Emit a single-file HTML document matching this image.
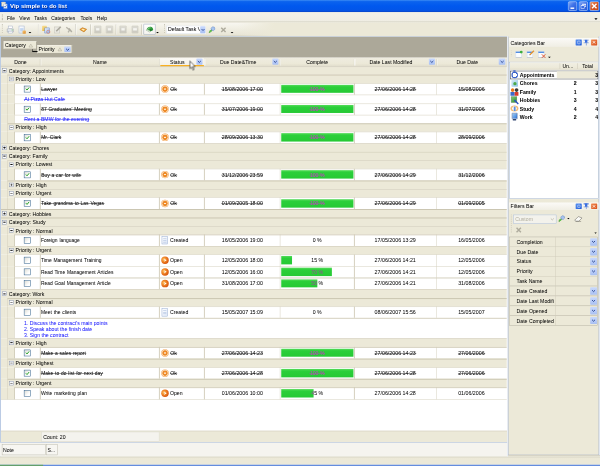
<!DOCTYPE html>
<html><head><meta charset="utf-8"><title>Vip simple to do list</title>
<style>
html,body{margin:0;padding:0;background:#ece9d8;overflow:hidden;}
body{width:600px;height:466px;position:relative;}
#r{position:absolute;left:0;top:0;width:1280px;height:994.2px;transform-origin:0 0;transform:scale(0.46875);overflow:hidden;font-family:"Liberation Sans",sans-serif;}
#fg{left:0;top:0;width:1280px;height:994.2px;filter:blur(0.3px);}
#bg{left:0;top:0;width:1280px;height:994.2px;}
#r div{position:absolute;}
#r svg{overflow:visible;}
.t{font-family:"Liberation Sans",sans-serif;font-size:11px;line-height:14px;height:14px;white-space:nowrap;color:#000;-webkit-text-stroke:0.04px;}
.tb{font-size:11px;}
.s{position:relative;display:inline-block;padding:0 0.6px;}
.s::after{content:"";position:absolute;left:0;right:0;top:7.0px;height:1.05px;background:currentColor;opacity:0.85;}
</style></head><body><div id="r"><div id="bg">
<div style="left:0.00px;top:0.00px;width:1280.00px;height:26.03px;background:linear-gradient(#3c8cf4 0%,#0b63ee 13%,#0058ee 50%,#0355e8 84%,#0a42c4 100%);"></div>
<div style="left:2.77px;top:4.27px;width:9.17px;height:9.81px;background:#f4eeda;border:1px solid #b9b29a;box-sizing:border-box;border-radius:1px;"></div>
<div style="left:6.61px;top:8.32px;width:9.81px;height:10.45px;background:linear-gradient(135deg,#ffffff,#e4ecf8);border:1px solid #9fb0cc;box-sizing:border-box;border-radius:1px;"></div>
<svg style="position:absolute;left:8.32px;top:10.03px" width="6.83" height="6.83" viewBox="0 0 9 9"><path d="M1.2 4.4L3.6 7L7.8 1.6" stroke="#2a5cc8" stroke-width="2" fill="none"/></svg>
<div style="left:1211.52px;top:2.77px;width:19.20px;height:19.84px;background:linear-gradient(135deg,#86aaf6,#3f72e8 45%,#2c5ad4);border:1px solid #fff;border-radius:3px;box-sizing:border-box;"></div>
<div style="left:1234.77px;top:2.77px;width:19.20px;height:19.84px;background:linear-gradient(135deg,#86aaf6,#3f72e8 45%,#2c5ad4);border:1px solid #fff;border-radius:3px;box-sizing:border-box;"></div>
<div style="left:1257.81px;top:2.77px;width:20.05px;height:19.84px;background:linear-gradient(135deg,#eea27a,#d85e2c 40%,#c4461a);border:1px solid #fff;border-radius:3px;box-sizing:border-box;"></div>
<div style="left:1216.64px;top:16.21px;width:7.89px;height:2.77px;background:#fff;"></div>
<div style="left:1242.45px;top:7.68px;width:7.47px;height:6.83px;border:1.3px solid #fff;border-top-width:2px;box-sizing:border-box;"></div>
<div style="left:1239.04px;top:11.09px;width:7.47px;height:6.83px;background:#3a6ce4;border:1.3px solid #fff;border-top-width:2px;box-sizing:border-box;"></div>
<svg style="position:absolute;left:1261.01px;top:5.97px" width="13.65" height="13.65" viewBox="0 0 10 10"><path d="M1.5 1.5L8.5 8.5M8.5 1.5L1.5 8.5" stroke="#fff" stroke-width="2.2"/></svg>
<div style="left:0.00px;top:25.60px;width:1280.00px;height:21.33px;background:linear-gradient(#f3f1e8,#efede3);"></div>
<div style="left:0.00px;top:45.87px;width:1280.00px;height:1.71px;background:#cdcabb;"></div>
<div style="left:4.48px;top:31.15px;width:1.71px;height:1.71px;background:#a9a595;"></div>
<div style="left:4.48px;top:34.56px;width:1.71px;height:1.71px;background:#a9a595;"></div>
<div style="left:4.48px;top:37.97px;width:1.71px;height:1.71px;background:#a9a595;"></div>
<div style="left:4.48px;top:41.39px;width:1.71px;height:1.71px;background:#a9a595;"></div>
<svg style="position:absolute;left:1267.63px;top:39.04px" width="6.83" height="3.41" viewBox="0 0 8 4"><path d="M0 0H8L4 4Z" fill="#000"/></svg>
<div style="left:0.00px;top:47.57px;width:1280.00px;height:30.29px;background:linear-gradient(#f8f7f1 0%,#f1efe4 40%,#e8e5d6 88%,#cbc8b6 100%);"></div>
<div style="left:506.67px;top:47.57px;width:773.33px;height:30.29px;background:linear-gradient(90deg,rgba(236,233,216,0),#ece9d8 10%);"></div>
<div style="left:4.48px;top:52.48px;width:1.71px;height:1.71px;background:#a9a595;"></div>
<div style="left:349.87px;top:52.48px;width:1.71px;height:1.71px;background:#a9a595;"></div>
<div style="left:4.48px;top:56.53px;width:1.71px;height:1.71px;background:#a9a595;"></div>
<div style="left:349.87px;top:56.53px;width:1.71px;height:1.71px;background:#a9a595;"></div>
<div style="left:4.48px;top:60.59px;width:1.71px;height:1.71px;background:#a9a595;"></div>
<div style="left:349.87px;top:60.59px;width:1.71px;height:1.71px;background:#a9a595;"></div>
<div style="left:4.48px;top:64.64px;width:1.71px;height:1.71px;background:#a9a595;"></div>
<div style="left:349.87px;top:64.64px;width:1.71px;height:1.71px;background:#a9a595;"></div>
<div style="left:4.48px;top:68.69px;width:1.71px;height:1.71px;background:#a9a595;"></div>
<div style="left:349.87px;top:68.69px;width:1.71px;height:1.71px;background:#a9a595;"></div>
<div style="left:14.51px;top:60.59px;width:14.51px;height:8.11px;background:linear-gradient(#f4f6fa,#cfd6e4);border:1px solid #8b95aa;box-sizing:border-box;border-radius:1px;"></div>
<div style="left:16.85px;top:54.83px;width:9.81px;height:6.40px;background:#fff;border:1px solid #9aa4b8;box-sizing:border-box;"></div>
<div style="left:16.85px;top:65.71px;width:9.81px;height:5.76px;background:#fff;border:1px solid #9aa4b8;box-sizing:border-box;"></div>
<div style="left:25.17px;top:63.15px;width:2.13px;height:1.71px;background:#5fbf4f;"></div>
<div style="left:40.11px;top:54.83px;width:11.95px;height:16.21px;background:linear-gradient(135deg,#fff,#dfe8f6);border:1px solid #9fb0cf;box-sizing:border-box;"></div>
<div style="left:43.09px;top:59.73px;width:6.83px;height:6.83px;background:#c4d6f0;"></div>
<div style="left:47.79px;top:64.85px;width:6.83px;height:6.83px;background:linear-gradient(135deg,#f4c878,#e08a28);border-radius:1px;"></div>
<svg style="position:absolute;left:61.01px;top:68.05px" width="5.97" height="2.99" viewBox="0 0 8 4"><path d="M0 0H8L4 4Z" fill="#000"/></svg>
<div style="left:80.53px;top:51.63px;width:1.49px;height:22.19px;background:#b3b09f;"></div>
<div style="left:81.92px;top:52.48px;width:1.07px;height:21.97px;background:#fff;"></div>
<div style="left:89.60px;top:55.47px;width:10.03px;height:10.24px;background:linear-gradient(#f7dc8c,#eebf4c);border-radius:1px;"></div>
<div style="left:95.36px;top:59.31px;width:10.67px;height:12.16px;background:linear-gradient(135deg,#e6effc,#8fb2ea);border:1px solid #5f86cc;box-sizing:border-box;"></div>
<div style="left:98.77px;top:63.57px;width:8.11px;height:8.11px;border:1.6px solid #e2664a;box-sizing:border-box;border-radius:50%;"></div>
<div style="left:115.63px;top:56.75px;width:12.37px;height:14.51px;background:#e9e8e1;border:1px solid #c3c1b6;box-sizing:border-box;"></div>
<svg style="position:absolute;left:117.76px;top:54.61px" width="13.65" height="13.65" viewBox="0 0 10 10"><path d="M1.5 8.5L8.5 1.5" stroke="#a9a79c" stroke-width="2.4"/></svg>
<svg style="position:absolute;left:139.09px;top:55.04px" width="15.79" height="15.79" viewBox="0 0 10 10"><path d="M1.5 2L6 5.5L4 9" stroke="#b7b5aa" stroke-width="1.8" fill="none"/><path d="M5 3.5L9 8.5" stroke="#b0aea3" stroke-width="2"/></svg>
<div style="left:160.11px;top:51.63px;width:1.49px;height:22.19px;background:#b3b09f;"></div>
<div style="left:161.49px;top:52.48px;width:1.07px;height:21.97px;background:#fff;"></div>
<svg style="position:absolute;left:169.17px;top:58.03px" width="17.07" height="11.31" viewBox="0 0 20 14"><path d="M1 6L8 1.5L19 5.5L12 12.5Z" fill="#f1a838" stroke="#b56a16" stroke-width="1.5"/><path d="M5.5 6.4L9 4.2L14.2 6.2L10.8 9.4Z" fill="#fdebc0"/></svg>
<div style="left:192.53px;top:51.63px;width:1.49px;height:22.19px;background:#b3b09f;"></div>
<div style="left:193.92px;top:52.48px;width:1.07px;height:21.97px;background:#fff;"></div>
<div style="left:200.75px;top:55.25px;width:14.93px;height:15.79px;background:linear-gradient(#dddcd5,#c9c7bd);border:1px solid #c4c2b8;box-sizing:border-box;border-radius:1px;"></div>
<div style="left:204.59px;top:59.73px;width:7.25px;height:5.12px;background:#f4f4f0;"></div>
<div style="left:225.71px;top:55.25px;width:14.93px;height:15.79px;background:linear-gradient(#dddcd5,#c9c7bd);border:1px solid #c4c2b8;box-sizing:border-box;border-radius:1px;"></div>
<div style="left:229.55px;top:59.73px;width:7.25px;height:5.12px;background:#f4f4f0;"></div>
<div style="left:246.72px;top:51.63px;width:1.49px;height:22.19px;background:#b3b09f;"></div>
<div style="left:248.11px;top:52.48px;width:1.07px;height:21.97px;background:#fff;"></div>
<div style="left:254.93px;top:55.25px;width:14.93px;height:15.79px;background:linear-gradient(#dddcd5,#c9c7bd);border:1px solid #c4c2b8;box-sizing:border-box;border-radius:1px;"></div>
<div style="left:258.77px;top:59.73px;width:7.25px;height:5.12px;background:#f4f4f0;"></div>
<div style="left:280.53px;top:55.25px;width:14.93px;height:15.79px;background:linear-gradient(#dddcd5,#c9c7bd);border:1px solid #c4c2b8;box-sizing:border-box;border-radius:1px;"></div>
<div style="left:284.37px;top:59.73px;width:7.25px;height:5.12px;background:#f4f4f0;"></div>
<div style="left:301.97px;top:51.63px;width:1.49px;height:22.19px;background:#b3b09f;"></div>
<div style="left:303.36px;top:52.48px;width:1.07px;height:21.97px;background:#fff;"></div>
<div style="left:305.92px;top:51.20px;width:26.45px;height:22.61px;background:linear-gradient(#ffffff,#f4f3ee);border:1px solid #9aa9c4;box-sizing:border-box;border-radius:1.5px;"></div>
<svg style="position:absolute;left:309.76px;top:53.97px" width="18.77" height="17.07" viewBox="0 0 22 20"><path d="M3 13C3 6 9 2.5 14 3.5C18 4.5 20 8 19.5 11.5L11 16Z" fill="#2f9a3c"/><path d="M5.5 12C6.5 8 9.5 6 13 6.2" stroke="#a6e0a0" stroke-width="2" fill="none"/><path d="M2.5 12.5L11 17.5L13 14.5L4 10.5Z" fill="#e9efe4" stroke="#8fa38a" stroke-width="0.8"/><path d="M12 9L19.5 11.5L12 15Z" fill="#1f7a2c"/></svg>
<svg style="position:absolute;left:333.23px;top:67.63px" width="5.97" height="2.99" viewBox="0 0 8 4"><path d="M0 0H8L4 4Z" fill="#000"/></svg>
<div style="left:355.20px;top:55.04px;width:83.41px;height:16.85px;background:#fff;border:1px solid #dfe5ef;box-sizing:border-box;"></div>
<div style="left:427.09px;top:55.89px;width:11.31px;height:15.15px;background:linear-gradient(#c9d9fc,#a9c0f3);border-radius:1.5px;"></div>
<svg style="position:absolute;left:428.59px;top:61.23px" width="8.32" height="5.12" viewBox="0 0 8 5"><path d="M1 1L4 4L7 1" stroke="#2a478f" stroke-width="1.9" fill="none"/></svg>
<svg style="position:absolute;left:443.73px;top:54.61px" width="16.64" height="16.64" viewBox="0 0 16 16"><path d="M2 14L10 6" stroke="#55a03c" stroke-width="2.6"/><path d="M9 2l4 1 1 4-3 3-4-1-1-4z" fill="#a9c4ee" stroke="#5f86c8" stroke-width="1"/><circle cx="5" cy="11" r="2.2" fill="#62bf50"/></svg>
<svg style="position:absolute;left:469.76px;top:56.53px" width="13.23" height="13.23" viewBox="0 0 10 10"><path d="M1.5 1.5L8.5 8.5M8.5 1.5L1.5 8.5" stroke="#aeab9d" stroke-width="2.3"/></svg>
<svg style="position:absolute;left:491.95px;top:68.05px" width="5.97" height="2.99" viewBox="0 0 8 4"><path d="M0 0H8L4 4Z" fill="#000"/></svg>
<div style="left:0.00px;top:77.23px;width:1082.88px;height:896.43px;background:#fff;"></div>
<div style="left:0.00px;top:77.23px;width:2.13px;height:896.43px;background:#b7c8e3;"></div>
<div style="left:1.92px;top:77.65px;width:1079.68px;height:45.44px;background:#aca899;"></div>
<div style="left:0.00px;top:76.59px;width:1082.45px;height:1.28px;background:#b9cbe6;"></div>
<div style="left:8.11px;top:88.32px;width:69.55px;height:17.07px;background:#ece9d8;border:1px solid #f8f7f1;border-right-color:#8d897a;border-bottom-color:#8d897a;box-sizing:border-box;"></div>
<div style="left:80.21px;top:96.43px;width:73.39px;height:17.28px;background:#ece9d8;border:1px solid #f8f7f1;border-right-color:#8d897a;border-bottom-color:#8d897a;box-sizing:border-box;"></div>
<div style="left:69.12px;top:105.39px;width:1.28px;height:5.12px;background:#000;"></div>
<div style="left:69.12px;top:109.44px;width:11.09px;height:1.28px;background:#000;"></div>
<svg style="position:absolute;left:60.80px;top:92.59px" width="9.39" height="8.32" viewBox="0 0 8 7"><path d="M0.7 6.3L4 0.8L7.3 6.3Z" fill="none" stroke="#aca899" stroke-width="1"/></svg>
<svg style="position:absolute;left:123.09px;top:100.91px" width="9.39" height="8.32" viewBox="0 0 8 7"><path d="M0.7 6.3L4 0.8L7.3 6.3Z" fill="none" stroke="#aca899" stroke-width="1"/></svg>
<div style="left:137.39px;top:98.77px;width:13.65px;height:12.37px;background:linear-gradient(#c9d9fc,#a9c0f3);border-radius:1.5px;"></div>
<svg style="position:absolute;left:139.95px;top:102.61px" width="8.53" height="5.33" viewBox="0 0 8 5"><path d="M1 1L4 4L7 1" stroke="#2a478f" stroke-width="1.9" fill="none"/></svg>
<div style="left:1.92px;top:123.09px;width:1079.68px;height:18.99px;background:linear-gradient(#efece0,#ece9d8 70%,#e2decd 100%);border-bottom:1px solid #cbc7b8;box-sizing:border-box;"></div>
<div style="left:85.23px;top:125.65px;width:1.28px;height:13.87px;background:#c9c5b5;"></div>
<div style="left:86.51px;top:125.65px;width:1.17px;height:13.87px;background:#fff;"></div>
<div style="left:339.52px;top:125.65px;width:1.28px;height:13.87px;background:#c9c5b5;"></div>
<div style="left:340.80px;top:125.65px;width:1.17px;height:13.87px;background:#fff;"></div>
<div style="left:435.09px;top:125.65px;width:1.28px;height:13.87px;background:#c9c5b5;"></div>
<div style="left:436.37px;top:125.65px;width:1.17px;height:13.87px;background:#fff;"></div>
<div style="left:596.80px;top:125.65px;width:1.28px;height:13.87px;background:#c9c5b5;"></div>
<div style="left:598.08px;top:125.65px;width:1.17px;height:13.87px;background:#fff;"></div>
<div style="left:755.09px;top:125.65px;width:1.28px;height:13.87px;background:#c9c5b5;"></div>
<div style="left:756.37px;top:125.65px;width:1.17px;height:13.87px;background:#fff;"></div>
<div style="left:930.67px;top:125.65px;width:1.28px;height:13.87px;background:#c9c5b5;"></div>
<div style="left:931.95px;top:125.65px;width:1.17px;height:13.87px;background:#fff;"></div>
<div style="left:1080.00px;top:125.65px;width:1.28px;height:13.87px;background:#c9c5b5;"></div>
<div style="left:1081.28px;top:125.65px;width:1.17px;height:13.87px;background:#fff;"></div>
<div style="left:341.33px;top:124.16px;width:93.65px;height:15.36px;background:linear-gradient(#fbfaf6,#f3f1e8);"></div>
<div style="left:341.76px;top:139.09px;width:93.23px;height:2.99px;background:#f9a600;"></div>
<div style="left:418.56px;top:125.44px;width:13.65px;height:12.37px;background:linear-gradient(#c9d9fc,#a9c0f3);border-radius:1.5px;"></div>
<svg style="position:absolute;left:421.12px;top:129.28px" width="8.53" height="5.33" viewBox="0 0 8 5"><path d="M1 1L4 4L7 1" stroke="#2a478f" stroke-width="1.9" fill="none"/></svg>
<div style="left:580.69px;top:125.44px;width:13.65px;height:12.37px;background:linear-gradient(#c9d9fc,#a9c0f3);border-radius:1.5px;"></div>
<svg style="position:absolute;left:583.25px;top:129.28px" width="8.53" height="5.33" viewBox="0 0 8 5"><path d="M1 1L4 4L7 1" stroke="#2a478f" stroke-width="1.9" fill="none"/></svg>
<div style="left:914.77px;top:125.44px;width:13.65px;height:12.37px;background:linear-gradient(#c9d9fc,#a9c0f3);border-radius:1.5px;"></div>
<svg style="position:absolute;left:917.33px;top:129.28px" width="8.53" height="5.33" viewBox="0 0 8 5"><path d="M1 1L4 4L7 1" stroke="#2a478f" stroke-width="1.9" fill="none"/></svg>
<div style="left:1064.32px;top:125.44px;width:13.65px;height:12.37px;background:linear-gradient(#c9d9fc,#a9c0f3);border-radius:1.5px;"></div>
<svg style="position:absolute;left:1066.88px;top:129.28px" width="8.53" height="5.33" viewBox="0 0 8 5"><path d="M1 1L4 4L7 1" stroke="#2a478f" stroke-width="1.9" fill="none"/></svg>
<div style="left:1.92px;top:142.08px;width:1078.83px;height:17.07px;background:#ece9d8;"></div>
<div style="left:1.92px;top:141.87px;width:1078.83px;height:1.60px;background:#c9c4af;"></div>
<div style="left:5.12px;top:146.35px;width:8.96px;height:8.96px;background:#fff;border:1.8px solid #808ca6;box-sizing:border-box;"></div>
<div style="left:7.25px;top:150.06px;width:4.69px;height:1.54px;background:#000;"></div>
<div style="left:1.92px;top:159.15px;width:1078.83px;height:18.56px;background:#ece9d8;"></div>
<div style="left:16.21px;top:158.93px;width:1064.53px;height:1.60px;background:#c9c4af;"></div>
<div style="left:15.57px;top:159.15px;width:1.28px;height:18.56px;background:#d2cdba;"></div>
<div style="left:20.05px;top:164.16px;width:8.96px;height:8.96px;background:#fff;border:1.8px solid #808ca6;box-sizing:border-box;"></div>
<div style="left:22.19px;top:167.87px;width:4.69px;height:1.54px;background:#000;"></div>
<div style="left:1.92px;top:177.71px;width:29.23px;height:24.11px;background:#ece9d8;"></div>
<div style="left:15.57px;top:177.71px;width:1.28px;height:24.11px;background:#d2cdba;"></div>
<div style="left:31.15px;top:177.71px;width:1049.60px;height:1.28px;background:#d2cdba;"></div>
<div style="left:30.29px;top:177.71px;width:1.71px;height:24.11px;background:#d2cdba;"></div>
<div style="left:85.12px;top:177.71px;width:1.71px;height:24.11px;background:#d2cdba;"></div>
<div style="left:339.41px;top:177.71px;width:1.71px;height:24.11px;background:#d2cdba;"></div>
<div style="left:434.99px;top:177.71px;width:1.71px;height:24.11px;background:#d2cdba;"></div>
<div style="left:596.69px;top:177.71px;width:1.71px;height:24.11px;background:#d2cdba;"></div>
<div style="left:754.99px;top:177.71px;width:1.71px;height:24.11px;background:#d2cdba;"></div>
<div style="left:930.56px;top:177.71px;width:1.71px;height:24.11px;background:#d2cdba;"></div>
<div style="left:51.09px;top:182.83px;width:14.29px;height:14.29px;background:linear-gradient(135deg,#dcdcd4,#fff 70%);border:1.3px solid #1c5180;box-sizing:border-box;"></div>
<svg style="position:absolute;left:53.55px;top:185.28px" width="9.39" height="9.39" viewBox="0 0 9 9"><path d="M1.2 4.2L3.6 6.8L7.8 1.6" stroke="#21a121" stroke-width="2" fill="none"/></svg>
<div style="left:343.89px;top:181.87px;width:15.79px;height:15.79px;background:radial-gradient(circle,#fff3e0 0 9%,#ee8a28 20% 44%,#f9cfa2 52% 62%,#f0a050 72%,#ee9440 100%);border-radius:50%;"></div>
<div style="left:599.89px;top:181.12px;width:154.24px;height:16.85px;background:linear-gradient(#58dc5c,#2bcf3a 25%,#26c934 100%);"></div>
<div style="left:1.92px;top:201.81px;width:29.23px;height:18.99px;background:#ece9d8;"></div>
<div style="left:15.57px;top:201.81px;width:1.28px;height:18.99px;background:#d2cdba;"></div>
<div style="left:30.51px;top:201.81px;width:1.28px;height:18.99px;background:#d2cdba;"></div>
<div style="left:31.15px;top:201.81px;width:1049.60px;height:1.28px;background:#d2cdba;"></div>
<div style="left:1.92px;top:220.80px;width:29.23px;height:24.11px;background:#ece9d8;"></div>
<div style="left:15.57px;top:220.80px;width:1.28px;height:24.11px;background:#d2cdba;"></div>
<div style="left:31.15px;top:220.80px;width:1049.60px;height:1.28px;background:#d2cdba;"></div>
<div style="left:30.29px;top:220.80px;width:1.71px;height:24.11px;background:#d2cdba;"></div>
<div style="left:85.12px;top:220.80px;width:1.71px;height:24.11px;background:#d2cdba;"></div>
<div style="left:339.41px;top:220.80px;width:1.71px;height:24.11px;background:#d2cdba;"></div>
<div style="left:434.99px;top:220.80px;width:1.71px;height:24.11px;background:#d2cdba;"></div>
<div style="left:596.69px;top:220.80px;width:1.71px;height:24.11px;background:#d2cdba;"></div>
<div style="left:754.99px;top:220.80px;width:1.71px;height:24.11px;background:#d2cdba;"></div>
<div style="left:930.56px;top:220.80px;width:1.71px;height:24.11px;background:#d2cdba;"></div>
<div style="left:51.09px;top:225.92px;width:14.29px;height:14.29px;background:linear-gradient(135deg,#dcdcd4,#fff 70%);border:1.3px solid #1c5180;box-sizing:border-box;"></div>
<svg style="position:absolute;left:53.55px;top:228.37px" width="9.39" height="9.39" viewBox="0 0 9 9"><path d="M1.2 4.2L3.6 6.8L7.8 1.6" stroke="#21a121" stroke-width="2" fill="none"/></svg>
<div style="left:343.89px;top:224.96px;width:15.79px;height:15.79px;background:radial-gradient(circle,#fff3e0 0 9%,#ee8a28 20% 44%,#f9cfa2 52% 62%,#f0a050 72%,#ee9440 100%);border-radius:50%;"></div>
<div style="left:599.89px;top:224.21px;width:154.24px;height:16.85px;background:linear-gradient(#58dc5c,#2bcf3a 25%,#26c934 100%);"></div>
<div style="left:1.92px;top:244.91px;width:29.23px;height:18.67px;background:#ece9d8;"></div>
<div style="left:15.57px;top:244.91px;width:1.28px;height:18.67px;background:#d2cdba;"></div>
<div style="left:30.51px;top:244.91px;width:1.28px;height:18.67px;background:#d2cdba;"></div>
<div style="left:31.15px;top:244.91px;width:1049.60px;height:1.28px;background:#d2cdba;"></div>
<div style="left:1.92px;top:263.57px;width:1078.83px;height:16.96px;background:#ece9d8;"></div>
<div style="left:16.21px;top:263.36px;width:1064.53px;height:1.60px;background:#c9c4af;"></div>
<div style="left:15.57px;top:263.57px;width:1.28px;height:16.96px;background:#d2cdba;"></div>
<div style="left:20.05px;top:267.79px;width:8.96px;height:8.96px;background:#fff;border:1.8px solid #808ca6;box-sizing:border-box;"></div>
<div style="left:22.19px;top:271.50px;width:4.69px;height:1.54px;background:#000;"></div>
<div style="left:1.92px;top:280.53px;width:29.23px;height:25.39px;background:#ece9d8;"></div>
<div style="left:15.57px;top:280.53px;width:1.28px;height:25.39px;background:#d2cdba;"></div>
<div style="left:31.15px;top:280.53px;width:1049.60px;height:1.28px;background:#d2cdba;"></div>
<div style="left:30.29px;top:280.53px;width:1.71px;height:25.39px;background:#d2cdba;"></div>
<div style="left:85.12px;top:280.53px;width:1.71px;height:25.39px;background:#d2cdba;"></div>
<div style="left:339.41px;top:280.53px;width:1.71px;height:25.39px;background:#d2cdba;"></div>
<div style="left:434.99px;top:280.53px;width:1.71px;height:25.39px;background:#d2cdba;"></div>
<div style="left:596.69px;top:280.53px;width:1.71px;height:25.39px;background:#d2cdba;"></div>
<div style="left:754.99px;top:280.53px;width:1.71px;height:25.39px;background:#d2cdba;"></div>
<div style="left:930.56px;top:280.53px;width:1.71px;height:25.39px;background:#d2cdba;"></div>
<div style="left:51.09px;top:286.29px;width:14.29px;height:14.29px;background:linear-gradient(135deg,#dcdcd4,#fff 70%);border:1.3px solid #1c5180;box-sizing:border-box;"></div>
<svg style="position:absolute;left:53.55px;top:288.75px" width="9.39" height="9.39" viewBox="0 0 9 9"><path d="M1.2 4.2L3.6 6.8L7.8 1.6" stroke="#21a121" stroke-width="2" fill="none"/></svg>
<div style="left:343.89px;top:285.33px;width:15.79px;height:15.79px;background:radial-gradient(circle,#fff3e0 0 9%,#ee8a28 20% 44%,#f9cfa2 52% 62%,#f0a050 72%,#ee9440 100%);border-radius:50%;"></div>
<div style="left:599.89px;top:283.95px;width:154.24px;height:18.13px;background:linear-gradient(#58dc5c,#2bcf3a 25%,#26c934 100%);"></div>
<div style="left:1.92px;top:305.92px;width:1078.83px;height:18.13px;background:#ece9d8;"></div>
<div style="left:1.92px;top:305.71px;width:1078.83px;height:1.60px;background:#c9c4af;"></div>
<div style="left:5.12px;top:310.72px;width:8.96px;height:8.96px;background:#fff;border:1.8px solid #808ca6;box-sizing:border-box;"></div>
<div style="left:7.25px;top:314.43px;width:4.69px;height:1.54px;background:#000;"></div>
<div style="left:8.83px;top:312.85px;width:1.54px;height:4.69px;background:#000;"></div>
<div style="left:1.92px;top:324.05px;width:1078.83px;height:17.92px;background:#ece9d8;"></div>
<div style="left:1.92px;top:323.84px;width:1078.83px;height:1.60px;background:#c9c4af;"></div>
<div style="left:5.12px;top:328.75px;width:8.96px;height:8.96px;background:#fff;border:1.8px solid #808ca6;box-sizing:border-box;"></div>
<div style="left:7.25px;top:332.46px;width:4.69px;height:1.54px;background:#000;"></div>
<div style="left:1.92px;top:341.97px;width:1078.83px;height:17.92px;background:#ece9d8;"></div>
<div style="left:16.21px;top:341.76px;width:1064.53px;height:1.60px;background:#c9c4af;"></div>
<div style="left:15.57px;top:341.97px;width:1.28px;height:17.92px;background:#d2cdba;"></div>
<div style="left:20.05px;top:346.67px;width:8.96px;height:8.96px;background:#fff;border:1.8px solid #808ca6;box-sizing:border-box;"></div>
<div style="left:22.19px;top:350.38px;width:4.69px;height:1.54px;background:#000;"></div>
<div style="left:1.92px;top:359.89px;width:29.23px;height:25.39px;background:#ece9d8;"></div>
<div style="left:15.57px;top:359.89px;width:1.28px;height:25.39px;background:#d2cdba;"></div>
<div style="left:31.15px;top:359.89px;width:1049.60px;height:1.28px;background:#d2cdba;"></div>
<div style="left:30.29px;top:359.89px;width:1.71px;height:25.39px;background:#d2cdba;"></div>
<div style="left:85.12px;top:359.89px;width:1.71px;height:25.39px;background:#d2cdba;"></div>
<div style="left:339.41px;top:359.89px;width:1.71px;height:25.39px;background:#d2cdba;"></div>
<div style="left:434.99px;top:359.89px;width:1.71px;height:25.39px;background:#d2cdba;"></div>
<div style="left:596.69px;top:359.89px;width:1.71px;height:25.39px;background:#d2cdba;"></div>
<div style="left:754.99px;top:359.89px;width:1.71px;height:25.39px;background:#d2cdba;"></div>
<div style="left:930.56px;top:359.89px;width:1.71px;height:25.39px;background:#d2cdba;"></div>
<div style="left:51.09px;top:365.65px;width:14.29px;height:14.29px;background:linear-gradient(135deg,#dcdcd4,#fff 70%);border:1.3px solid #1c5180;box-sizing:border-box;"></div>
<svg style="position:absolute;left:53.55px;top:368.11px" width="9.39" height="9.39" viewBox="0 0 9 9"><path d="M1.2 4.2L3.6 6.8L7.8 1.6" stroke="#21a121" stroke-width="2" fill="none"/></svg>
<div style="left:343.89px;top:364.69px;width:15.79px;height:15.79px;background:radial-gradient(circle,#fff3e0 0 9%,#ee8a28 20% 44%,#f9cfa2 52% 62%,#f0a050 72%,#ee9440 100%);border-radius:50%;"></div>
<div style="left:599.89px;top:363.31px;width:154.24px;height:18.13px;background:linear-gradient(#58dc5c,#2bcf3a 25%,#26c934 100%);"></div>
<div style="left:1.92px;top:385.28px;width:1078.83px;height:18.45px;background:#ece9d8;"></div>
<div style="left:16.21px;top:385.07px;width:1064.53px;height:1.60px;background:#c9c4af;"></div>
<div style="left:15.57px;top:385.28px;width:1.28px;height:18.45px;background:#d2cdba;"></div>
<div style="left:20.05px;top:390.24px;width:8.96px;height:8.96px;background:#fff;border:1.8px solid #808ca6;box-sizing:border-box;"></div>
<div style="left:22.19px;top:393.95px;width:4.69px;height:1.54px;background:#000;"></div>
<div style="left:23.77px;top:392.37px;width:1.54px;height:4.69px;background:#000;"></div>
<div style="left:1.92px;top:403.73px;width:1078.83px;height:17.39px;background:#ece9d8;"></div>
<div style="left:16.21px;top:403.52px;width:1064.53px;height:1.60px;background:#c9c4af;"></div>
<div style="left:15.57px;top:403.73px;width:1.28px;height:17.39px;background:#d2cdba;"></div>
<div style="left:20.05px;top:408.16px;width:8.96px;height:8.96px;background:#fff;border:1.8px solid #808ca6;box-sizing:border-box;"></div>
<div style="left:22.19px;top:411.87px;width:4.69px;height:1.54px;background:#000;"></div>
<div style="left:1.92px;top:421.12px;width:29.23px;height:25.28px;background:#ece9d8;"></div>
<div style="left:15.57px;top:421.12px;width:1.28px;height:25.28px;background:#d2cdba;"></div>
<div style="left:31.15px;top:421.12px;width:1049.60px;height:1.28px;background:#d2cdba;"></div>
<div style="left:30.29px;top:421.12px;width:1.71px;height:25.28px;background:#d2cdba;"></div>
<div style="left:85.12px;top:421.12px;width:1.71px;height:25.28px;background:#d2cdba;"></div>
<div style="left:339.41px;top:421.12px;width:1.71px;height:25.28px;background:#d2cdba;"></div>
<div style="left:434.99px;top:421.12px;width:1.71px;height:25.28px;background:#d2cdba;"></div>
<div style="left:596.69px;top:421.12px;width:1.71px;height:25.28px;background:#d2cdba;"></div>
<div style="left:754.99px;top:421.12px;width:1.71px;height:25.28px;background:#d2cdba;"></div>
<div style="left:930.56px;top:421.12px;width:1.71px;height:25.28px;background:#d2cdba;"></div>
<div style="left:51.09px;top:426.83px;width:14.29px;height:14.29px;background:linear-gradient(135deg,#dcdcd4,#fff 70%);border:1.3px solid #1c5180;box-sizing:border-box;"></div>
<svg style="position:absolute;left:53.55px;top:429.28px" width="9.39" height="9.39" viewBox="0 0 9 9"><path d="M1.2 4.2L3.6 6.8L7.8 1.6" stroke="#21a121" stroke-width="2" fill="none"/></svg>
<div style="left:343.89px;top:425.87px;width:15.79px;height:15.79px;background:radial-gradient(circle,#fff3e0 0 9%,#ee8a28 20% 44%,#f9cfa2 52% 62%,#f0a050 72%,#ee9440 100%);border-radius:50%;"></div>
<div style="left:599.89px;top:424.53px;width:154.24px;height:18.03px;background:linear-gradient(#58dc5c,#2bcf3a 25%,#26c934 100%);"></div>
<div style="left:1.92px;top:446.40px;width:1078.83px;height:18.24px;background:#ece9d8;"></div>
<div style="left:1.92px;top:446.19px;width:1078.83px;height:1.60px;background:#c9c4af;"></div>
<div style="left:5.12px;top:451.25px;width:8.96px;height:8.96px;background:#fff;border:1.8px solid #808ca6;box-sizing:border-box;"></div>
<div style="left:7.25px;top:454.97px;width:4.69px;height:1.54px;background:#000;"></div>
<div style="left:8.83px;top:453.39px;width:1.54px;height:4.69px;background:#000;"></div>
<div style="left:1.92px;top:464.64px;width:1078.83px;height:18.35px;background:#ece9d8;"></div>
<div style="left:1.92px;top:464.43px;width:1078.83px;height:1.60px;background:#c9c4af;"></div>
<div style="left:5.12px;top:469.55px;width:8.96px;height:8.96px;background:#fff;border:1.8px solid #808ca6;box-sizing:border-box;"></div>
<div style="left:7.25px;top:473.26px;width:4.69px;height:1.54px;background:#000;"></div>
<div style="left:1.92px;top:482.99px;width:1078.83px;height:17.28px;background:#ece9d8;"></div>
<div style="left:16.21px;top:482.77px;width:1064.53px;height:1.60px;background:#c9c4af;"></div>
<div style="left:15.57px;top:482.99px;width:1.28px;height:17.28px;background:#d2cdba;"></div>
<div style="left:20.05px;top:487.36px;width:8.96px;height:8.96px;background:#fff;border:1.8px solid #808ca6;box-sizing:border-box;"></div>
<div style="left:22.19px;top:491.07px;width:4.69px;height:1.54px;background:#000;"></div>
<div style="left:1.92px;top:500.27px;width:29.23px;height:24.75px;background:#ece9d8;"></div>
<div style="left:15.57px;top:500.27px;width:1.28px;height:24.75px;background:#d2cdba;"></div>
<div style="left:31.15px;top:500.27px;width:1049.60px;height:1.28px;background:#d2cdba;"></div>
<div style="left:30.29px;top:500.27px;width:1.71px;height:24.75px;background:#d2cdba;"></div>
<div style="left:85.12px;top:500.27px;width:1.71px;height:24.75px;background:#d2cdba;"></div>
<div style="left:339.41px;top:500.27px;width:1.71px;height:24.75px;background:#d2cdba;"></div>
<div style="left:434.99px;top:500.27px;width:1.71px;height:24.75px;background:#d2cdba;"></div>
<div style="left:596.69px;top:500.27px;width:1.71px;height:24.75px;background:#d2cdba;"></div>
<div style="left:754.99px;top:500.27px;width:1.71px;height:24.75px;background:#d2cdba;"></div>
<div style="left:930.56px;top:500.27px;width:1.71px;height:24.75px;background:#d2cdba;"></div>
<div style="left:51.09px;top:505.71px;width:14.29px;height:14.29px;background:linear-gradient(135deg,#dcdcd4,#fff 70%);border:1.3px solid #1c5180;box-sizing:border-box;"></div>
<div style="left:345.39px;top:504.11px;width:12.80px;height:17.07px;background:linear-gradient(135deg,#fff,#dfe8f8);border:1px solid #8ea6cf;box-sizing:border-box;"></div>
<div style="left:348.37px;top:508.80px;width:6.83px;height:1.07px;background:#9fb4d8;"></div>
<div style="left:348.37px;top:512.21px;width:6.83px;height:1.07px;background:#9fb4d8;"></div>
<div style="left:348.37px;top:515.63px;width:6.83px;height:1.07px;background:#9fb4d8;"></div>
<div style="left:1.92px;top:525.01px;width:1078.83px;height:17.81px;background:#ece9d8;"></div>
<div style="left:16.21px;top:524.80px;width:1064.53px;height:1.60px;background:#c9c4af;"></div>
<div style="left:15.57px;top:525.01px;width:1.28px;height:17.81px;background:#d2cdba;"></div>
<div style="left:20.05px;top:529.65px;width:8.96px;height:8.96px;background:#fff;border:1.8px solid #808ca6;box-sizing:border-box;"></div>
<div style="left:22.19px;top:533.37px;width:4.69px;height:1.54px;background:#000;"></div>
<div style="left:1.92px;top:542.83px;width:29.23px;height:24.85px;background:#ece9d8;"></div>
<div style="left:15.57px;top:542.83px;width:1.28px;height:24.85px;background:#d2cdba;"></div>
<div style="left:31.15px;top:542.83px;width:1049.60px;height:1.28px;background:#d2cdba;"></div>
<div style="left:30.29px;top:542.83px;width:1.71px;height:24.85px;background:#d2cdba;"></div>
<div style="left:85.12px;top:542.83px;width:1.71px;height:24.85px;background:#d2cdba;"></div>
<div style="left:339.41px;top:542.83px;width:1.71px;height:24.85px;background:#d2cdba;"></div>
<div style="left:434.99px;top:542.83px;width:1.71px;height:24.85px;background:#d2cdba;"></div>
<div style="left:596.69px;top:542.83px;width:1.71px;height:24.85px;background:#d2cdba;"></div>
<div style="left:754.99px;top:542.83px;width:1.71px;height:24.85px;background:#d2cdba;"></div>
<div style="left:930.56px;top:542.83px;width:1.71px;height:24.85px;background:#d2cdba;"></div>
<div style="left:51.09px;top:548.32px;width:14.29px;height:14.29px;background:linear-gradient(135deg,#dcdcd4,#fff 70%);border:1.3px solid #1c5180;box-sizing:border-box;"></div>
<div style="left:343.89px;top:547.36px;width:15.79px;height:15.79px;background:radial-gradient(circle at 36% 40%,#ffc870 0,#f08a2a 32%,#dc5a10 68%,#c44c08 100%);border-radius:50%;"></div>
<svg style="position:absolute;left:345.81px;top:549.28px" width="11.95" height="11.95" viewBox="0 0 10 10"><path d="M3 2L8 5L3 8L4.6 5Z" fill="#fff"/></svg>
<div style="left:599.89px;top:546.24px;width:23.14px;height:17.60px;background:linear-gradient(#58dc5c,#2bcf3a 25%,#26c934 100%);"></div>
<div style="left:1.92px;top:567.68px;width:29.23px;height:24.75px;background:#ece9d8;"></div>
<div style="left:15.57px;top:567.68px;width:1.28px;height:24.75px;background:#d2cdba;"></div>
<div style="left:31.15px;top:567.68px;width:1049.60px;height:1.28px;background:#d2cdba;"></div>
<div style="left:30.29px;top:567.68px;width:1.71px;height:24.75px;background:#d2cdba;"></div>
<div style="left:85.12px;top:567.68px;width:1.71px;height:24.75px;background:#d2cdba;"></div>
<div style="left:339.41px;top:567.68px;width:1.71px;height:24.75px;background:#d2cdba;"></div>
<div style="left:434.99px;top:567.68px;width:1.71px;height:24.75px;background:#d2cdba;"></div>
<div style="left:596.69px;top:567.68px;width:1.71px;height:24.75px;background:#d2cdba;"></div>
<div style="left:754.99px;top:567.68px;width:1.71px;height:24.75px;background:#d2cdba;"></div>
<div style="left:930.56px;top:567.68px;width:1.71px;height:24.75px;background:#d2cdba;"></div>
<div style="left:51.09px;top:573.12px;width:14.29px;height:14.29px;background:linear-gradient(135deg,#dcdcd4,#fff 70%);border:1.3px solid #1c5180;box-sizing:border-box;"></div>
<div style="left:343.89px;top:572.16px;width:15.79px;height:15.79px;background:radial-gradient(circle at 36% 40%,#ffc870 0,#f08a2a 32%,#dc5a10 68%,#c44c08 100%);border-radius:50%;"></div>
<svg style="position:absolute;left:345.81px;top:574.08px" width="11.95" height="11.95" viewBox="0 0 10 10"><path d="M3 2L8 5L3 8L4.6 5Z" fill="#fff"/></svg>
<div style="left:599.89px;top:571.09px;width:107.97px;height:17.49px;background:linear-gradient(#58dc5c,#2bcf3a 25%,#26c934 100%);"></div>
<div style="left:1.92px;top:592.43px;width:29.23px;height:24.64px;background:#ece9d8;"></div>
<div style="left:15.57px;top:592.43px;width:1.28px;height:24.64px;background:#d2cdba;"></div>
<div style="left:31.15px;top:592.43px;width:1049.60px;height:1.28px;background:#d2cdba;"></div>
<div style="left:30.29px;top:592.43px;width:1.71px;height:24.64px;background:#d2cdba;"></div>
<div style="left:85.12px;top:592.43px;width:1.71px;height:24.64px;background:#d2cdba;"></div>
<div style="left:339.41px;top:592.43px;width:1.71px;height:24.64px;background:#d2cdba;"></div>
<div style="left:434.99px;top:592.43px;width:1.71px;height:24.64px;background:#d2cdba;"></div>
<div style="left:596.69px;top:592.43px;width:1.71px;height:24.64px;background:#d2cdba;"></div>
<div style="left:754.99px;top:592.43px;width:1.71px;height:24.64px;background:#d2cdba;"></div>
<div style="left:930.56px;top:592.43px;width:1.71px;height:24.64px;background:#d2cdba;"></div>
<div style="left:51.09px;top:597.81px;width:14.29px;height:14.29px;background:linear-gradient(135deg,#dcdcd4,#fff 70%);border:1.3px solid #1c5180;box-sizing:border-box;"></div>
<div style="left:343.89px;top:596.85px;width:15.79px;height:15.79px;background:radial-gradient(circle at 36% 40%,#ffc870 0,#f08a2a 32%,#dc5a10 68%,#c44c08 100%);border-radius:50%;"></div>
<svg style="position:absolute;left:345.81px;top:598.77px" width="11.95" height="11.95" viewBox="0 0 10 10"><path d="M3 2L8 5L3 8L4.6 5Z" fill="#fff"/></svg>
<div style="left:599.89px;top:595.84px;width:77.12px;height:17.39px;background:linear-gradient(#58dc5c,#2bcf3a 25%,#26c934 100%);"></div>
<div style="left:1.92px;top:617.07px;width:1078.83px;height:19.31px;background:#ece9d8;"></div>
<div style="left:1.92px;top:616.85px;width:1078.83px;height:1.60px;background:#c9c4af;"></div>
<div style="left:5.12px;top:622.45px;width:8.96px;height:8.96px;background:#fff;border:1.8px solid #808ca6;box-sizing:border-box;"></div>
<div style="left:7.25px;top:626.17px;width:4.69px;height:1.54px;background:#000;"></div>
<div style="left:1.92px;top:636.37px;width:1078.83px;height:17.49px;background:#ece9d8;"></div>
<div style="left:16.21px;top:636.16px;width:1064.53px;height:1.60px;background:#c9c4af;"></div>
<div style="left:15.57px;top:636.37px;width:1.28px;height:17.49px;background:#d2cdba;"></div>
<div style="left:20.05px;top:640.85px;width:8.96px;height:8.96px;background:#fff;border:1.8px solid #808ca6;box-sizing:border-box;"></div>
<div style="left:22.19px;top:644.57px;width:4.69px;height:1.54px;background:#000;"></div>
<div style="left:1.92px;top:653.87px;width:29.23px;height:24.53px;background:#ece9d8;"></div>
<div style="left:15.57px;top:653.87px;width:1.28px;height:24.53px;background:#d2cdba;"></div>
<div style="left:31.15px;top:653.87px;width:1049.60px;height:1.28px;background:#d2cdba;"></div>
<div style="left:30.29px;top:653.87px;width:1.71px;height:24.53px;background:#d2cdba;"></div>
<div style="left:85.12px;top:653.87px;width:1.71px;height:24.53px;background:#d2cdba;"></div>
<div style="left:339.41px;top:653.87px;width:1.71px;height:24.53px;background:#d2cdba;"></div>
<div style="left:434.99px;top:653.87px;width:1.71px;height:24.53px;background:#d2cdba;"></div>
<div style="left:596.69px;top:653.87px;width:1.71px;height:24.53px;background:#d2cdba;"></div>
<div style="left:754.99px;top:653.87px;width:1.71px;height:24.53px;background:#d2cdba;"></div>
<div style="left:930.56px;top:653.87px;width:1.71px;height:24.53px;background:#d2cdba;"></div>
<div style="left:51.09px;top:659.20px;width:14.29px;height:14.29px;background:linear-gradient(135deg,#dcdcd4,#fff 70%);border:1.3px solid #1c5180;box-sizing:border-box;"></div>
<div style="left:345.39px;top:657.60px;width:12.80px;height:17.07px;background:linear-gradient(135deg,#fff,#dfe8f8);border:1px solid #8ea6cf;box-sizing:border-box;"></div>
<div style="left:348.37px;top:662.29px;width:6.83px;height:1.07px;background:#9fb4d8;"></div>
<div style="left:348.37px;top:665.71px;width:6.83px;height:1.07px;background:#9fb4d8;"></div>
<div style="left:348.37px;top:669.12px;width:6.83px;height:1.07px;background:#9fb4d8;"></div>
<div style="left:1.92px;top:678.40px;width:29.23px;height:43.41px;background:#ece9d8;"></div>
<div style="left:15.57px;top:678.40px;width:1.28px;height:43.41px;background:#d2cdba;"></div>
<div style="left:30.51px;top:678.40px;width:1.28px;height:43.41px;background:#d2cdba;"></div>
<div style="left:31.15px;top:678.40px;width:1049.60px;height:1.28px;background:#d2cdba;"></div>
<div style="left:1.92px;top:721.81px;width:1078.83px;height:18.45px;background:#ece9d8;"></div>
<div style="left:16.21px;top:721.60px;width:1064.53px;height:1.60px;background:#c9c4af;"></div>
<div style="left:15.57px;top:721.81px;width:1.28px;height:18.45px;background:#d2cdba;"></div>
<div style="left:20.05px;top:726.77px;width:8.96px;height:8.96px;background:#fff;border:1.8px solid #808ca6;box-sizing:border-box;"></div>
<div style="left:22.19px;top:730.49px;width:4.69px;height:1.54px;background:#000;"></div>
<div style="left:1.92px;top:740.27px;width:29.23px;height:24.96px;background:#ece9d8;"></div>
<div style="left:15.57px;top:740.27px;width:1.28px;height:24.96px;background:#d2cdba;"></div>
<div style="left:31.15px;top:740.27px;width:1049.60px;height:1.28px;background:#d2cdba;"></div>
<div style="left:30.29px;top:740.27px;width:1.71px;height:24.96px;background:#d2cdba;"></div>
<div style="left:85.12px;top:740.27px;width:1.71px;height:24.96px;background:#d2cdba;"></div>
<div style="left:339.41px;top:740.27px;width:1.71px;height:24.96px;background:#d2cdba;"></div>
<div style="left:434.99px;top:740.27px;width:1.71px;height:24.96px;background:#d2cdba;"></div>
<div style="left:596.69px;top:740.27px;width:1.71px;height:24.96px;background:#d2cdba;"></div>
<div style="left:754.99px;top:740.27px;width:1.71px;height:24.96px;background:#d2cdba;"></div>
<div style="left:930.56px;top:740.27px;width:1.71px;height:24.96px;background:#d2cdba;"></div>
<div style="left:51.09px;top:745.81px;width:14.29px;height:14.29px;background:linear-gradient(135deg,#dcdcd4,#fff 70%);border:1.3px solid #1c5180;box-sizing:border-box;"></div>
<svg style="position:absolute;left:53.55px;top:748.27px" width="9.39" height="9.39" viewBox="0 0 9 9"><path d="M1.2 4.2L3.6 6.8L7.8 1.6" stroke="#21a121" stroke-width="2" fill="none"/></svg>
<div style="left:343.89px;top:744.85px;width:15.79px;height:15.79px;background:radial-gradient(circle,#fff3e0 0 9%,#ee8a28 20% 44%,#f9cfa2 52% 62%,#f0a050 72%,#ee9440 100%);border-radius:50%;"></div>
<div style="left:599.89px;top:743.68px;width:154.24px;height:17.71px;background:linear-gradient(#58dc5c,#2bcf3a 25%,#26c934 100%);"></div>
<div style="left:1.92px;top:765.23px;width:1078.83px;height:18.56px;background:#ece9d8;"></div>
<div style="left:16.21px;top:765.01px;width:1064.53px;height:1.60px;background:#c9c4af;"></div>
<div style="left:15.57px;top:765.23px;width:1.28px;height:18.56px;background:#d2cdba;"></div>
<div style="left:20.05px;top:770.24px;width:8.96px;height:8.96px;background:#fff;border:1.8px solid #808ca6;box-sizing:border-box;"></div>
<div style="left:22.19px;top:773.95px;width:4.69px;height:1.54px;background:#000;"></div>
<div style="left:1.92px;top:783.79px;width:29.23px;height:24.64px;background:#ece9d8;"></div>
<div style="left:15.57px;top:783.79px;width:1.28px;height:24.64px;background:#d2cdba;"></div>
<div style="left:31.15px;top:783.79px;width:1049.60px;height:1.28px;background:#d2cdba;"></div>
<div style="left:30.29px;top:783.79px;width:1.71px;height:24.64px;background:#d2cdba;"></div>
<div style="left:85.12px;top:783.79px;width:1.71px;height:24.64px;background:#d2cdba;"></div>
<div style="left:339.41px;top:783.79px;width:1.71px;height:24.64px;background:#d2cdba;"></div>
<div style="left:434.99px;top:783.79px;width:1.71px;height:24.64px;background:#d2cdba;"></div>
<div style="left:596.69px;top:783.79px;width:1.71px;height:24.64px;background:#d2cdba;"></div>
<div style="left:754.99px;top:783.79px;width:1.71px;height:24.64px;background:#d2cdba;"></div>
<div style="left:930.56px;top:783.79px;width:1.71px;height:24.64px;background:#d2cdba;"></div>
<div style="left:51.09px;top:789.17px;width:14.29px;height:14.29px;background:linear-gradient(135deg,#dcdcd4,#fff 70%);border:1.3px solid #1c5180;box-sizing:border-box;"></div>
<svg style="position:absolute;left:53.55px;top:791.63px" width="9.39" height="9.39" viewBox="0 0 9 9"><path d="M1.2 4.2L3.6 6.8L7.8 1.6" stroke="#21a121" stroke-width="2" fill="none"/></svg>
<div style="left:343.89px;top:788.21px;width:15.79px;height:15.79px;background:radial-gradient(circle,#fff3e0 0 9%,#ee8a28 20% 44%,#f9cfa2 52% 62%,#f0a050 72%,#ee9440 100%);border-radius:50%;"></div>
<div style="left:599.89px;top:787.20px;width:154.24px;height:17.39px;background:linear-gradient(#58dc5c,#2bcf3a 25%,#26c934 100%);"></div>
<div style="left:1.92px;top:808.43px;width:1078.83px;height:17.81px;background:#ece9d8;"></div>
<div style="left:16.21px;top:808.21px;width:1064.53px;height:1.60px;background:#c9c4af;"></div>
<div style="left:15.57px;top:808.43px;width:1.28px;height:17.81px;background:#d2cdba;"></div>
<div style="left:20.05px;top:813.07px;width:8.96px;height:8.96px;background:#fff;border:1.8px solid #808ca6;box-sizing:border-box;"></div>
<div style="left:22.19px;top:816.78px;width:4.69px;height:1.54px;background:#000;"></div>
<div style="left:1.92px;top:826.24px;width:29.23px;height:25.39px;background:#ece9d8;"></div>
<div style="left:15.57px;top:826.24px;width:1.28px;height:25.39px;background:#d2cdba;"></div>
<div style="left:31.15px;top:826.24px;width:1049.60px;height:1.28px;background:#d2cdba;"></div>
<div style="left:30.29px;top:826.24px;width:1.71px;height:25.39px;background:#d2cdba;"></div>
<div style="left:85.12px;top:826.24px;width:1.71px;height:25.39px;background:#d2cdba;"></div>
<div style="left:339.41px;top:826.24px;width:1.71px;height:25.39px;background:#d2cdba;"></div>
<div style="left:434.99px;top:826.24px;width:1.71px;height:25.39px;background:#d2cdba;"></div>
<div style="left:596.69px;top:826.24px;width:1.71px;height:25.39px;background:#d2cdba;"></div>
<div style="left:754.99px;top:826.24px;width:1.71px;height:25.39px;background:#d2cdba;"></div>
<div style="left:930.56px;top:826.24px;width:1.71px;height:25.39px;background:#d2cdba;"></div>
<div style="left:51.09px;top:832.00px;width:14.29px;height:14.29px;background:linear-gradient(135deg,#dcdcd4,#fff 70%);border:1.3px solid #1c5180;box-sizing:border-box;"></div>
<div style="left:343.89px;top:831.04px;width:15.79px;height:15.79px;background:radial-gradient(circle at 36% 40%,#ffc870 0,#f08a2a 32%,#dc5a10 68%,#c44c08 100%);border-radius:50%;"></div>
<svg style="position:absolute;left:345.81px;top:832.96px" width="11.95" height="11.95" viewBox="0 0 10 10"><path d="M3 2L8 5L3 8L4.6 5Z" fill="#fff"/></svg>
<div style="left:599.89px;top:829.65px;width:69.41px;height:18.13px;background:linear-gradient(#58dc5c,#2bcf3a 25%,#26c934 100%);"></div>
<div style="left:1.92px;top:851.63px;width:1078.83px;height:1.28px;background:#d2cdba;"></div>
<div style="left:1.92px;top:919.04px;width:1079.68px;height:24.32px;background:#ece9d8;border-top:1px solid #c9c5b5;box-sizing:border-box;"></div>
<div style="left:88.32px;top:921.17px;width:251.73px;height:20.91px;background:#f4f3ee;border:1px solid #d9d6c8;box-sizing:border-box;"></div>
<div style="left:0.00px;top:943.36px;width:1082.88px;height:30.29px;background:#f5f4ef;border-top:1px solid #9db5d8;box-sizing:border-box;"></div>
<div style="left:4.27px;top:948.48px;width:93.44px;height:22.19px;background:#f7f6f2;border:1px solid #b9b6a8;box-sizing:border-box;"></div>
<div style="left:98.13px;top:948.48px;width:24.75px;height:22.19px;background:#f7f6f2;border:1px solid #b9b6a8;box-sizing:border-box;"></div>
<div style="left:0.00px;top:973.65px;width:1280.00px;height:17.49px;background:linear-gradient(#d9d6c6,#ece9d8 25%,#ece9d8);"></div>
<div style="left:0.00px;top:990.93px;width:1280.00px;height:3.20px;background:linear-gradient(#9db8ec,#5a86de 70%);"></div>
<div style="left:0.00px;top:990.93px;width:92.37px;height:3.20px;background:linear-gradient(#9cc49c,#62a062 70%);"></div>
<div style="left:1082.88px;top:77.23px;width:197.12px;height:896.43px;background:#ece9d8;"></div>
<div style="left:1082.45px;top:77.23px;width:1.28px;height:896.43px;background:#e4ebf6;"></div>
<div style="left:1083.73px;top:78.08px;width:1.49px;height:893.01px;background:#a9b6cc;"></div>
<div style="left:1276.59px;top:78.08px;width:1.49px;height:893.01px;background:#a9b6cc;"></div>
<div style="left:1278.08px;top:77.23px;width:1.92px;height:896.43px;background:#dfe6f2;"></div>
<div style="left:1085.87px;top:81.07px;width:191.15px;height:18.77px;background:linear-gradient(#fbfaf7,#f0eee4);"></div>
<div style="left:1228.37px;top:84.27px;width:12.80px;height:12.37px;background:linear-gradient(135deg,#5b93f0,#1f5bd8);border-radius:1px;"></div>
<div style="left:1231.79px;top:87.25px;width:6.40px;height:6.40px;border:1px solid #fff;box-sizing:border-box;border-radius:1px;"></div>
<div style="left:1245.44px;top:84.69px;width:10.24px;height:1.28px;background:#2b5fd0;"></div>
<div style="left:1247.79px;top:84.69px;width:5.55px;height:6.61px;background:#3a6fe0;"></div>
<div style="left:1245.01px;top:90.88px;width:11.09px;height:1.49px;background:#2b5fd0;"></div>
<div style="left:1249.92px;top:92.37px;width:1.28px;height:4.48px;background:#2b5fd0;"></div>
<div style="left:1260.80px;top:84.27px;width:12.80px;height:12.37px;background:linear-gradient(135deg,#f08a50,#d8501c);border-radius:1px;"></div>
<svg style="position:absolute;left:1262.93px;top:86.19px" width="8.53" height="8.53" viewBox="0 0 10 10"><path d="M2 2L8 8M8 2L2 8" stroke="#fff" stroke-width="2"/></svg>
<div style="left:1089.92px;top:107.95px;width:1.49px;height:1.49px;background:#b5b1a0;"></div>
<div style="left:1089.92px;top:111.57px;width:1.49px;height:1.49px;background:#b5b1a0;"></div>
<div style="left:1089.92px;top:115.20px;width:1.49px;height:1.49px;background:#b5b1a0;"></div>
<div style="left:1089.92px;top:118.83px;width:1.49px;height:1.49px;background:#b5b1a0;"></div>
<div style="left:1100.37px;top:110.08px;width:12.80px;height:12.80px;background:#fbfdff;border:1px solid #c3d2ec;border-top:3px solid #4f8ae2;border-bottom:1.4px solid #9aa3b4;box-sizing:border-box;"></div>
<div style="left:1108.69px;top:107.95px;width:5.97px;height:5.97px;background:#3cae3c;border-radius:50%;"></div>
<div style="left:1124.48px;top:110.08px;width:12.80px;height:12.80px;background:#fbfdff;border:1px solid #c3d2ec;border-top:3px solid #4f8ae2;border-bottom:1.4px solid #9aa3b4;box-sizing:border-box;"></div>
<svg style="position:absolute;left:1128.32px;top:107.31px" width="12.37" height="12.37" viewBox="0 0 10 10"><path d="M2 8L9 1" stroke="#e8952c" stroke-width="2.2"/><path d="M1.2 9L3 8.4L1.8 7.2Z" fill="#444"/></svg>
<div style="left:1148.37px;top:110.08px;width:12.80px;height:12.80px;background:#fbfdff;border:1px solid #c3d2ec;border-top:3px solid #4f8ae2;border-bottom:1.4px solid #9aa3b4;box-sizing:border-box;"></div>
<svg style="position:absolute;left:1155.20px;top:114.56px" width="9.39" height="9.39" viewBox="0 0 10 10"><path d="M1 1L9 9M9 1L1 9" stroke="#e0532c" stroke-width="2.2"/></svg>
<svg style="position:absolute;left:1169.07px;top:120.75px" width="5.97" height="2.99" viewBox="0 0 8 4"><path d="M0 0H8L4 4Z" fill="#000"/></svg>
<div style="left:1086.29px;top:131.84px;width:190.29px;height:291.84px;background:#fff;border:1px solid #9cb0cf;box-sizing:border-box;"></div>
<div style="left:1087.57px;top:132.69px;width:187.95px;height:16.21px;background:linear-gradient(#f1efe4,#ece9d8 75%,#dedac9);"></div>
<div style="left:1193.81px;top:134.83px;width:1.28px;height:11.95px;background:#c9c5b5;"></div>
<div style="left:1230.51px;top:134.83px;width:1.28px;height:11.95px;background:#c9c5b5;"></div>
<div style="left:1088.00px;top:150.61px;width:187.73px;height:17.92px;background:#fff;border:1px solid #20242c;box-sizing:border-box;"></div>
<div style="left:1187.84px;top:152.32px;width:86.19px;height:14.51px;background:#ece9d8;"></div>
<div style="left:1090.77px;top:152.96px;width:14.08px;height:14.08px;background:radial-gradient(circle,#fff 0 42%,#3a62c8 50% 100%);border-radius:50%;"></div>
<div style="left:1095.25px;top:150.19px;width:5.12px;height:2.99px;background:#3a62c8;"></div>
<div style="left:1090.99px;top:170.24px;width:13.65px;height:14.93px;background:linear-gradient(135deg,#d8ecf8,#8fc6e8);border-radius:1.5px;"></div>
<div style="left:1095.25px;top:175.36px;width:6.83px;height:6.83px;background:#4aa84a;border-radius:50%;"></div>
<div style="left:1089.71px;top:188.16px;width:7.68px;height:7.68px;background:#e8791e;border-radius:50%;"></div>
<div style="left:1098.24px;top:188.16px;width:7.68px;height:7.68px;background:#3a3a3a;border-radius:50%;"></div>
<div style="left:1089.28px;top:195.84px;width:8.53px;height:7.68px;background:#3d69c8;border-radius:1.5px 1.5px 0 0;"></div>
<div style="left:1097.81px;top:195.84px;width:8.53px;height:7.68px;background:#d83a2a;border-radius:1.5px 1.5px 0 0;"></div>
<div style="left:1089.71px;top:205.65px;width:13.65px;height:13.23px;background:linear-gradient(135deg,#7fc86a,#2d8f3a);border:1px solid #2a6a2a;box-sizing:border-box;"></div>
<svg style="position:absolute;left:1094.83px;top:210.77px" width="11.95" height="11.95" viewBox="0 0 10 10"><path d="M2 2L9 9" stroke="#2a4fc0" stroke-width="2.4"/></svg>
<div style="left:1089.28px;top:225.07px;width:17.07px;height:13.23px;background:radial-gradient(circle,#fff 0 38%,#f0b060 50% 100%);border-radius:50%;opacity:0.85;"></div>
<div style="left:1095.89px;top:226.77px;width:3.84px;height:9.81px;background:#5a8fe0;border-radius:1px;"></div>
<div style="left:1091.84px;top:240.85px;width:11.95px;height:13.23px;background:linear-gradient(135deg,#9fd0f8,#2f74d8);border:1px solid #2a4f90;box-sizing:border-box;border-radius:1px;"></div>
<div style="left:1094.40px;top:254.08px;width:6.83px;height:3.41px;background:#2a3f6a;"></div>
<div style="left:1085.87px;top:431.79px;width:191.15px;height:16.64px;background:linear-gradient(#fbfaf7,#f0eee4);"></div>
<div style="left:1228.37px;top:433.92px;width:12.80px;height:12.37px;background:linear-gradient(135deg,#5b93f0,#1f5bd8);border-radius:1px;"></div>
<div style="left:1231.79px;top:436.91px;width:6.40px;height:6.40px;border:1px solid #fff;box-sizing:border-box;border-radius:1px;"></div>
<div style="left:1245.44px;top:434.35px;width:10.24px;height:1.28px;background:#2b5fd0;"></div>
<div style="left:1247.79px;top:434.35px;width:5.55px;height:6.61px;background:#3a6fe0;"></div>
<div style="left:1245.01px;top:440.53px;width:11.09px;height:1.49px;background:#2b5fd0;"></div>
<div style="left:1249.92px;top:442.03px;width:1.28px;height:4.48px;background:#2b5fd0;"></div>
<div style="left:1260.80px;top:433.92px;width:12.80px;height:12.37px;background:linear-gradient(135deg,#f08a50,#d8501c);border-radius:1px;"></div>
<svg style="position:absolute;left:1262.93px;top:435.84px" width="8.53" height="8.53" viewBox="0 0 10 10"><path d="M2 2L8 8M8 2L2 8" stroke="#fff" stroke-width="2"/></svg>
<div style="left:1089.92px;top:456.53px;width:1.49px;height:1.49px;background:#b5b1a0;"></div>
<div style="left:1089.92px;top:460.48px;width:1.49px;height:1.49px;background:#b5b1a0;"></div>
<div style="left:1089.92px;top:464.43px;width:1.49px;height:1.49px;background:#b5b1a0;"></div>
<div style="left:1089.92px;top:468.37px;width:1.49px;height:1.49px;background:#b5b1a0;"></div>
<div style="left:1089.92px;top:472.32px;width:1.49px;height:1.49px;background:#b5b1a0;"></div>
<div style="left:1089.92px;top:476.27px;width:1.49px;height:1.49px;background:#b5b1a0;"></div>
<div style="left:1089.92px;top:480.21px;width:1.49px;height:1.49px;background:#b5b1a0;"></div>
<div style="left:1089.92px;top:484.16px;width:1.49px;height:1.49px;background:#b5b1a0;"></div>
<div style="left:1089.92px;top:488.11px;width:1.49px;height:1.49px;background:#b5b1a0;"></div>
<div style="left:1089.92px;top:492.05px;width:1.49px;height:1.49px;background:#b5b1a0;"></div>
<div style="left:1089.92px;top:496.00px;width:1.49px;height:1.49px;background:#b5b1a0;"></div>
<div style="left:1095.04px;top:458.03px;width:91.95px;height:18.56px;background:#f3f2ec;border:1px solid #a9bcd8;box-sizing:border-box;"></div>
<svg style="position:absolute;left:1173.76px;top:464.64px" width="8.53" height="5.33" viewBox="0 0 8 5"><path d="M1 1L4 4L7 1" stroke="#b8b5a6" stroke-width="1.6" fill="none"/></svg>
<svg style="position:absolute;left:1189.97px;top:458.45px" width="16.64" height="16.64" viewBox="0 0 16 16"><path d="M2 14L10 6" stroke="#55a03c" stroke-width="2.6"/><path d="M9 2l4 1 1 4-3 3-4-1-1-4z" fill="#a9c4ee" stroke="#5f86c8" stroke-width="1"/><circle cx="5" cy="11" r="2.2" fill="#62bf50"/></svg>
<svg style="position:absolute;left:1210.45px;top:465.07px" width="5.12" height="2.56" viewBox="0 0 8 4"><path d="M0 0H8L4 4Z" fill="#000"/></svg>
<svg style="position:absolute;left:1223.68px;top:459.95px" width="19.63" height="13.87" viewBox="0 0 20 14"><path d="M2 10L10 2L18 5L11 12H5Z" fill="#fbfbf8" stroke="#77756c" stroke-width="1.3"/><path d="M4 12.6H16" stroke="#77756c" stroke-width="1.2"/></svg>
<svg style="position:absolute;left:1100.16px;top:484.05px" width="13.23" height="13.23" viewBox="0 0 10 10"><path d="M1.5 1.5L8.5 8.5M8.5 1.5L1.5 8.5" stroke="#aeab9d" stroke-width="2.3"/></svg>
<svg style="position:absolute;left:1268.05px;top:495.79px" width="5.12" height="2.56" viewBox="0 0 8 4"><path d="M0 0H8L4 4Z" fill="#000"/></svg>
<div style="left:1086.29px;top:504.75px;width:189.01px;height:189.78px;background:#ece9d8;border:1px solid #b3b0a2;box-sizing:border-box;"></div>
<div style="left:1259.09px;top:507.78px;width:14.51px;height:15.79px;background:linear-gradient(#c9d9fc,#a9c0f3);border-radius:1.5px;"></div>
<svg style="position:absolute;left:1262.08px;top:513.32px" width="8.53" height="5.33" viewBox="0 0 8 5"><path d="M1 1L4 4L7 1" stroke="#2a478f" stroke-width="1.9" fill="none"/></svg>
<div style="left:1087.15px;top:525.53px;width:187.31px;height:1.28px;background:#cfcbbb;"></div>
<div style="left:1259.09px;top:528.77px;width:14.51px;height:15.79px;background:linear-gradient(#c9d9fc,#a9c0f3);border-radius:1.5px;"></div>
<svg style="position:absolute;left:1262.08px;top:534.31px" width="8.53" height="5.33" viewBox="0 0 8 5"><path d="M1 1L4 4L7 1" stroke="#2a478f" stroke-width="1.9" fill="none"/></svg>
<div style="left:1087.15px;top:546.52px;width:187.31px;height:1.28px;background:#cfcbbb;"></div>
<div style="left:1259.09px;top:549.76px;width:14.51px;height:15.79px;background:linear-gradient(#c9d9fc,#a9c0f3);border-radius:1.5px;"></div>
<svg style="position:absolute;left:1262.08px;top:555.31px" width="8.53" height="5.33" viewBox="0 0 8 5"><path d="M1 1L4 4L7 1" stroke="#2a478f" stroke-width="1.9" fill="none"/></svg>
<div style="left:1087.15px;top:567.51px;width:187.31px;height:1.28px;background:#cfcbbb;"></div>
<div style="left:1259.09px;top:570.75px;width:14.51px;height:15.79px;background:linear-gradient(#c9d9fc,#a9c0f3);border-radius:1.5px;"></div>
<svg style="position:absolute;left:1262.08px;top:576.30px" width="8.53" height="5.33" viewBox="0 0 8 5"><path d="M1 1L4 4L7 1" stroke="#2a478f" stroke-width="1.9" fill="none"/></svg>
<div style="left:1087.15px;top:588.50px;width:187.31px;height:1.28px;background:#cfcbbb;"></div>
<div style="left:1087.15px;top:609.49px;width:187.31px;height:1.28px;background:#cfcbbb;"></div>
<div style="left:1259.09px;top:612.74px;width:14.51px;height:15.79px;background:linear-gradient(#c9d9fc,#a9c0f3);border-radius:1.5px;"></div>
<svg style="position:absolute;left:1262.08px;top:618.28px" width="8.53" height="5.33" viewBox="0 0 8 5"><path d="M1 1L4 4L7 1" stroke="#2a478f" stroke-width="1.9" fill="none"/></svg>
<div style="left:1087.15px;top:630.49px;width:187.31px;height:1.28px;background:#cfcbbb;"></div>
<div style="left:1259.09px;top:633.73px;width:14.51px;height:15.79px;background:linear-gradient(#c9d9fc,#a9c0f3);border-radius:1.5px;"></div>
<svg style="position:absolute;left:1262.08px;top:639.27px" width="8.53" height="5.33" viewBox="0 0 8 5"><path d="M1 1L4 4L7 1" stroke="#2a478f" stroke-width="1.9" fill="none"/></svg>
<div style="left:1087.15px;top:651.48px;width:187.31px;height:1.28px;background:#cfcbbb;"></div>
<div style="left:1259.09px;top:654.72px;width:14.51px;height:15.79px;background:linear-gradient(#c9d9fc,#a9c0f3);border-radius:1.5px;"></div>
<svg style="position:absolute;left:1262.08px;top:660.27px" width="8.53" height="5.33" viewBox="0 0 8 5"><path d="M1 1L4 4L7 1" stroke="#2a478f" stroke-width="1.9" fill="none"/></svg>
<div style="left:1087.15px;top:672.47px;width:187.31px;height:1.28px;background:#cfcbbb;"></div>
<div style="left:1259.09px;top:675.71px;width:14.51px;height:15.79px;background:linear-gradient(#c9d9fc,#a9c0f3);border-radius:1.5px;"></div>
<svg style="position:absolute;left:1262.08px;top:681.26px" width="8.53" height="5.33" viewBox="0 0 8 5"><path d="M1 1L4 4L7 1" stroke="#2a478f" stroke-width="1.9" fill="none"/></svg>
<div style="left:1184.64px;top:505.60px;width:1.28px;height:188.07px;background:#cfcbbb;"></div>
<div style="left:1083.73px;top:969.60px;width:194.35px;height:1.71px;background:#a9b3c4;"></div>
<div style="left:1083.73px;top:971.31px;width:196.27px;height:2.35px;background:linear-gradient(#cfccbd,#e4e1d2);"></div>
</div><div id="fg">
<div class="t" style="left:21.33px;top:7.29px;color:#fff;font-weight:bold;font-size:12.9px;-webkit-text-stroke:0;text-shadow:1px 1px 0 #0a2a8a;">Vip simple to do list</div>
<div class="t" style="left:14.72px;top:31.19px;font-size:10.6px;">File</div>
<div class="t" style="left:41.17px;top:31.19px;font-size:10.6px;">View</div>
<div class="t" style="left:72.96px;top:31.19px;font-size:10.6px;">Tasks</div>
<div class="t" style="left:109.23px;top:31.19px;font-size:10.6px;">Categories</div>
<div class="t" style="left:171.95px;top:31.19px;font-size:10.6px;">Tools</div>
<div class="t" style="left:206.51px;top:31.19px;font-size:10.6px;">Help</div>
<div style="left:354.77px;top:54.61px;width:71.47px;height:17.49px;overflow:hidden;"><div class="t" style="left:3.5px;top:1.7px;">Default Task V</div></div>
<div class="t" style="left:10.45px;top:89.64px;">Category</div>
<div class="t" style="left:82.35px;top:97.96px;">Priority</div>
<div class="t" style="left:-106.27px;top:125.69px;width:300px;text-align:center;">Done</div>
<div class="t" style="left:63.33px;top:125.69px;width:300px;text-align:center;">Name</div>
<div class="t" style="left:228.24px;top:125.69px;width:300px;text-align:center;">Status</div>
<div class="t" style="left:358.16px;top:125.69px;width:300px;text-align:center;">Due Date&amp;Time</div>
<div class="t" style="left:526.69px;top:125.69px;width:300px;text-align:center;">Complete</div>
<div class="t" style="left:684.13px;top:125.69px;width:300px;text-align:center;">Date Last Modified</div>
<div class="t" style="left:846.91px;top:125.69px;width:300px;text-align:center;">Due Date</div>
<div class="t" style="left:18.56px;top:143.83px;">Category: Appointments</div>
<div class="t" style="left:33.28px;top:161.64px;">Priority : Low</div>
<div class="t" style="left:87.25px;top:182.97px;font-size:10.5px;word-spacing:1px;"><span class="s">Lawyer</span></div>
<div class="t" style="left:362.67px;top:182.97px;"><span class="s">Ok</span></div>
<div class="t" style="left:366.91px;top:182.97px;width:300px;text-align:center;font-size:11.3px;"><span class="s">15/08/2006 17:00</span></div>
<div class="t" style="left:526.69px;top:182.97px;width:300px;text-align:center;color:#c040c0;"><span class="s">100 %</span></div>
<div class="t" style="left:693.09px;top:182.97px;width:300px;text-align:center;font-size:11.3px;"><span class="s">27/06/2006 14:28</span></div>
<div class="t" style="left:855.65px;top:182.97px;width:300px;text-align:center;font-size:11.3px;"><span class="s">15/08/2006</span></div>
<div class="t" style="left:51.20px;top:204.73px;color:#1414ff;"><span class="s">At Pizza Hut Cafe</span></div>
<div class="t" style="left:87.25px;top:226.07px;font-size:10.5px;word-spacing:1px;"><span class="s">87 Graduates' Meeting</span></div>
<div class="t" style="left:362.67px;top:226.07px;"><span class="s">Ok</span></div>
<div class="t" style="left:366.91px;top:226.07px;width:300px;text-align:center;font-size:11.3px;"><span class="s">31/07/2006 19:00</span></div>
<div class="t" style="left:526.69px;top:226.07px;width:300px;text-align:center;color:#c040c0;"><span class="s">100 %</span></div>
<div class="t" style="left:693.09px;top:226.07px;width:300px;text-align:center;font-size:11.3px;"><span class="s">27/06/2006 14:28</span></div>
<div class="t" style="left:855.65px;top:226.07px;width:300px;text-align:center;font-size:11.3px;"><span class="s">31/07/2006</span></div>
<div class="t" style="left:51.20px;top:247.67px;color:#1414ff;"><span class="s">Rent a BMW for the evening</span></div>
<div class="t" style="left:33.28px;top:265.27px;">Priority : High</div>
<div class="t" style="left:87.25px;top:286.44px;font-size:10.5px;word-spacing:1px;"><span class="s">Mr. Clark</span></div>
<div class="t" style="left:362.67px;top:286.44px;"><span class="s">Ok</span></div>
<div class="t" style="left:366.91px;top:286.44px;width:300px;text-align:center;font-size:11.3px;"><span class="s">28/09/2006 13:30</span></div>
<div class="t" style="left:526.69px;top:286.44px;width:300px;text-align:center;color:#c040c0;"><span class="s">100 %</span></div>
<div class="t" style="left:693.09px;top:286.44px;width:300px;text-align:center;font-size:11.3px;"><span class="s">27/06/2006 14:28</span></div>
<div class="t" style="left:855.65px;top:286.44px;width:300px;text-align:center;font-size:11.3px;"><span class="s">28/09/2006</span></div>
<div class="t" style="left:18.56px;top:308.20px;">Category: Chores</div>
<div class="t" style="left:18.56px;top:326.23px;">Category: Family</div>
<div class="t" style="left:33.28px;top:344.15px;">Priority : Lowest</div>
<div class="t" style="left:87.25px;top:365.80px;font-size:10.5px;word-spacing:1px;"><span class="s">Buy a car for wife</span></div>
<div class="t" style="left:362.67px;top:365.80px;"><span class="s">Ok</span></div>
<div class="t" style="left:366.91px;top:365.80px;width:300px;text-align:center;font-size:11.3px;"><span class="s">31/12/2006 23:59</span></div>
<div class="t" style="left:526.69px;top:365.80px;width:300px;text-align:center;color:#c040c0;"><span class="s">100 %</span></div>
<div class="t" style="left:693.09px;top:365.80px;width:300px;text-align:center;font-size:11.3px;"><span class="s">27/06/2006 14:29</span></div>
<div class="t" style="left:855.65px;top:365.80px;width:300px;text-align:center;font-size:11.3px;"><span class="s">31/12/2006</span></div>
<div class="t" style="left:33.28px;top:387.72px;">Priority : High</div>
<div class="t" style="left:33.28px;top:405.64px;">Priority : Urgent</div>
<div class="t" style="left:87.25px;top:426.97px;font-size:10.5px;word-spacing:1px;"><span class="s">Take grandma to Las Vegas</span></div>
<div class="t" style="left:362.67px;top:426.97px;"><span class="s">Ok</span></div>
<div class="t" style="left:366.91px;top:426.97px;width:300px;text-align:center;font-size:11.3px;"><span class="s">01/09/2005 18:00</span></div>
<div class="t" style="left:526.69px;top:426.97px;width:300px;text-align:center;color:#c040c0;"><span class="s">100 %</span></div>
<div class="t" style="left:693.09px;top:426.97px;width:300px;text-align:center;font-size:11.3px;"><span class="s">27/06/2006 14:29</span></div>
<div class="t" style="left:855.65px;top:426.97px;width:300px;text-align:center;font-size:11.3px;"><span class="s">01/09/2005</span></div>
<div class="t" style="left:18.56px;top:448.73px;">Category: Hobbies</div>
<div class="t" style="left:18.56px;top:467.03px;">Category: Study</div>
<div class="t" style="left:33.28px;top:484.84px;">Priority : Normal</div>
<div class="t" style="left:87.25px;top:505.85px;font-size:10.5px;word-spacing:1px;">Foreign language</div>
<div class="t" style="left:362.67px;top:505.85px;">Created</div>
<div class="t" style="left:366.91px;top:505.85px;width:300px;text-align:center;font-size:11.3px;">16/05/2006 19:00</div>
<div class="t" style="left:526.69px;top:505.85px;width:300px;text-align:center;">0 %</div>
<div class="t" style="left:693.09px;top:505.85px;width:300px;text-align:center;font-size:11.3px;">17/05/2006 13:29</div>
<div class="t" style="left:855.65px;top:505.85px;width:300px;text-align:center;font-size:11.3px;">16/05/2006</div>
<div class="t" style="left:33.28px;top:527.13px;">Priority : Urgent</div>
<div class="t" style="left:87.25px;top:548.47px;font-size:10.5px;word-spacing:1px;">Time Management Training</div>
<div class="t" style="left:362.67px;top:548.47px;">Open</div>
<div class="t" style="left:366.91px;top:548.47px;width:300px;text-align:center;font-size:11.3px;">12/05/2006 18:00</div>
<div class="t" style="left:526.69px;top:548.47px;width:300px;text-align:center;">15 %</div>
<div class="t" style="left:693.09px;top:548.47px;width:300px;text-align:center;font-size:11.3px;">27/06/2006 14:21</div>
<div class="t" style="left:855.65px;top:548.47px;width:300px;text-align:center;font-size:11.3px;">12/05/2006</div>
<div class="t" style="left:87.25px;top:573.27px;font-size:10.5px;word-spacing:1px;">Read Time Management Articles</div>
<div class="t" style="left:362.67px;top:573.27px;">Open</div>
<div class="t" style="left:366.91px;top:573.27px;width:300px;text-align:center;font-size:11.3px;">12/05/2006 16:00</div>
<div class="t" style="left:526.69px;top:573.27px;width:300px;text-align:center;"><span style="color:#9a4a9a">70 %</span></div>
<div class="t" style="left:693.09px;top:573.27px;width:300px;text-align:center;font-size:11.3px;">27/06/2006 14:21</div>
<div class="t" style="left:855.65px;top:573.27px;width:300px;text-align:center;font-size:11.3px;">12/05/2006</div>
<div class="t" style="left:87.25px;top:597.96px;font-size:10.5px;word-spacing:1px;">Read Goal Management Article</div>
<div class="t" style="left:362.67px;top:597.96px;">Open</div>
<div class="t" style="left:366.91px;top:597.96px;width:300px;text-align:center;font-size:11.3px;">31/08/2006 17:00</div>
<div class="t" style="left:526.69px;top:597.96px;width:300px;text-align:center;"><span style="color:#9a4a9a">50</span> %</div>
<div class="t" style="left:693.09px;top:597.96px;width:300px;text-align:center;font-size:11.3px;">27/06/2006 14:21</div>
<div class="t" style="left:855.65px;top:597.96px;width:300px;text-align:center;font-size:11.3px;">31/08/2006</div>
<div class="t" style="left:18.56px;top:619.93px;">Category: Work</div>
<div class="t" style="left:33.28px;top:638.33px;">Priority : Normal</div>
<div class="t" style="left:87.25px;top:659.35px;font-size:10.5px;word-spacing:1px;">Meet the clients</div>
<div class="t" style="left:362.67px;top:659.35px;">Created</div>
<div class="t" style="left:366.91px;top:659.35px;width:300px;text-align:center;font-size:11.3px;">15/05/2007 15:09</div>
<div class="t" style="left:526.69px;top:659.35px;width:300px;text-align:center;">0 %</div>
<div class="t" style="left:693.09px;top:659.35px;width:300px;text-align:center;font-size:11.3px;">08/06/2007 15:56</div>
<div class="t" style="left:855.65px;top:659.35px;width:300px;text-align:center;font-size:11.3px;">15/05/2007</div>
<div class="t" style="left:51.20px;top:681.85px;color:#1414ff;">1. Discuss the contract's main points</div>
<div class="t" style="left:51.20px;top:694.65px;color:#1414ff;">2. Speak about the finish date</div>
<div class="t" style="left:51.20px;top:707.45px;color:#1414ff;">3. Sign the contract</div>
<div class="t" style="left:33.28px;top:724.25px;">Priority : High</div>
<div class="t" style="left:87.25px;top:745.96px;font-size:10.5px;word-spacing:1px;"><span class="s">Make a sales report</span></div>
<div class="t" style="left:362.67px;top:745.96px;"><span class="s">Ok</span></div>
<div class="t" style="left:366.91px;top:745.96px;width:300px;text-align:center;font-size:11.3px;"><span class="s">27/06/2006 14:23</span></div>
<div class="t" style="left:526.69px;top:745.96px;width:300px;text-align:center;color:#c040c0;"><span class="s">100 %</span></div>
<div class="t" style="left:693.09px;top:745.96px;width:300px;text-align:center;font-size:11.3px;"><span class="s">27/06/2006 14:23</span></div>
<div class="t" style="left:855.65px;top:745.96px;width:300px;text-align:center;font-size:11.3px;"><span class="s">27/06/2006</span></div>
<div class="t" style="left:33.28px;top:767.72px;">Priority : Highest</div>
<div class="t" style="left:87.25px;top:789.32px;font-size:10.5px;word-spacing:1px;"><span class="s">Make to do list for next day</span></div>
<div class="t" style="left:362.67px;top:789.32px;"><span class="s">Ok</span></div>
<div class="t" style="left:366.91px;top:789.32px;width:300px;text-align:center;font-size:11.3px;"><span class="s">27/06/2006 14:28</span></div>
<div class="t" style="left:526.69px;top:789.32px;width:300px;text-align:center;color:#c040c0;"><span class="s">100 %</span></div>
<div class="t" style="left:693.09px;top:789.32px;width:300px;text-align:center;font-size:11.3px;"><span class="s">27/06/2006 14:28</span></div>
<div class="t" style="left:855.65px;top:789.32px;width:300px;text-align:center;font-size:11.3px;"><span class="s">27/06/2006</span></div>
<div class="t" style="left:33.28px;top:810.55px;">Priority : Urgent</div>
<div class="t" style="left:87.25px;top:832.15px;font-size:10.5px;word-spacing:1px;">Write marketing plan</div>
<div class="t" style="left:362.67px;top:832.15px;">Open</div>
<div class="t" style="left:366.91px;top:832.15px;width:300px;text-align:center;font-size:11.3px;">01/06/2006 10:00</div>
<div class="t" style="left:526.69px;top:832.15px;width:300px;text-align:center;"><span style="color:#9a4a9a">4</span>5 %</div>
<div class="t" style="left:693.09px;top:832.15px;width:300px;text-align:center;font-size:11.3px;">27/06/2006 14:28</div>
<div class="t" style="left:855.65px;top:832.15px;width:300px;text-align:center;font-size:11.3px;">01/06/2006</div>
<div class="t" style="left:92.16px;top:925.05px;">Count: 20</div>
<div class="t" style="left:6.40px;top:952.79px;">Note</div>
<div class="t" style="left:101.12px;top:952.79px;">S...</div>
<div class="t" style="left:1089.28px;top:83.67px;">Categories Bar</div>
<div class="t" style="left:1199.79px;top:134.23px;">Un...</div>
<div class="t" style="left:1242.03px;top:134.23px;">Total</div>
<div class="t tb" style="left:1108.91px;top:152.57px;font-weight:bold;">Appointments</div>
<div class="t tb" style="left:976.16px;top:152.57px;width:300px;text-align:right;font-weight:bold;">3</div>
<div class="t tb" style="left:1108.91px;top:170.92px;font-weight:bold;">Chores</div>
<div class="t tb" style="left:930.08px;top:170.92px;width:300px;text-align:right;font-weight:bold;">2</div>
<div class="t tb" style="left:976.16px;top:170.92px;width:300px;text-align:right;font-weight:bold;">3</div>
<div class="t tb" style="left:1108.91px;top:188.84px;font-weight:bold;">Family</div>
<div class="t tb" style="left:930.08px;top:188.84px;width:300px;text-align:right;font-weight:bold;">1</div>
<div class="t tb" style="left:976.16px;top:188.84px;width:300px;text-align:right;font-weight:bold;">3</div>
<div class="t tb" style="left:1108.91px;top:206.76px;font-weight:bold;">Hobbies</div>
<div class="t tb" style="left:930.08px;top:206.76px;width:300px;text-align:right;font-weight:bold;">3</div>
<div class="t tb" style="left:976.16px;top:206.76px;width:300px;text-align:right;font-weight:bold;">3</div>
<div class="t tb" style="left:1108.91px;top:224.89px;font-weight:bold;">Study</div>
<div class="t tb" style="left:930.08px;top:224.89px;width:300px;text-align:right;font-weight:bold;">4</div>
<div class="t tb" style="left:976.16px;top:224.89px;width:300px;text-align:right;font-weight:bold;">4</div>
<div class="t tb" style="left:1108.91px;top:242.39px;font-weight:bold;">Work</div>
<div class="t tb" style="left:930.08px;top:242.39px;width:300px;text-align:right;font-weight:bold;">2</div>
<div class="t tb" style="left:976.16px;top:242.39px;width:300px;text-align:right;font-weight:bold;">4</div>
<div class="t" style="left:1089.28px;top:433.32px;">Filters Bar</div>
<div class="t" style="left:1099.09px;top:460.20px;color:#b5b2a3;">Custom</div>
<div style="left:1102.08px;top:505.39px;width:82.77px;height:19.93px;overflow:hidden;"><div class="t" style="left:0;top:3.20px">Completion</div></div>
<div style="left:1102.08px;top:526.38px;width:82.77px;height:19.93px;overflow:hidden;"><div class="t" style="left:0;top:3.20px">Due Date</div></div>
<div style="left:1102.08px;top:547.37px;width:82.77px;height:19.93px;overflow:hidden;"><div class="t" style="left:0;top:3.20px">Status</div></div>
<div style="left:1102.08px;top:568.36px;width:82.77px;height:19.93px;overflow:hidden;"><div class="t" style="left:0;top:3.20px">Priority</div></div>
<div style="left:1102.08px;top:589.35px;width:82.77px;height:19.93px;overflow:hidden;"><div class="t" style="left:0;top:3.20px">Task Name</div></div>
<div style="left:1102.08px;top:610.35px;width:82.77px;height:19.93px;overflow:hidden;"><div class="t" style="left:0;top:3.20px">Date Created</div></div>
<div style="left:1102.08px;top:631.34px;width:82.77px;height:19.93px;overflow:hidden;"><div class="t" style="left:0;top:3.20px">Date Last Modifi</div></div>
<div style="left:1102.08px;top:652.33px;width:82.77px;height:19.93px;overflow:hidden;"><div class="t" style="left:0;top:3.20px">Date Opened</div></div>
<div style="left:1102.08px;top:673.32px;width:82.77px;height:19.93px;overflow:hidden;"><div class="t" style="left:0;top:3.20px">Date Completed</div></div>
<svg style="position:absolute;left:404.27px;top:129.28px" width="13.87" height="21.97" viewBox="0 0 12 19"><path d="M1 1V15L4.2 12L6.6 17.6L8.8 16.6L6.4 11.2H10.8Z" fill="#fff" stroke="#000" stroke-width="1"/></svg>
</div></div></body></html>
